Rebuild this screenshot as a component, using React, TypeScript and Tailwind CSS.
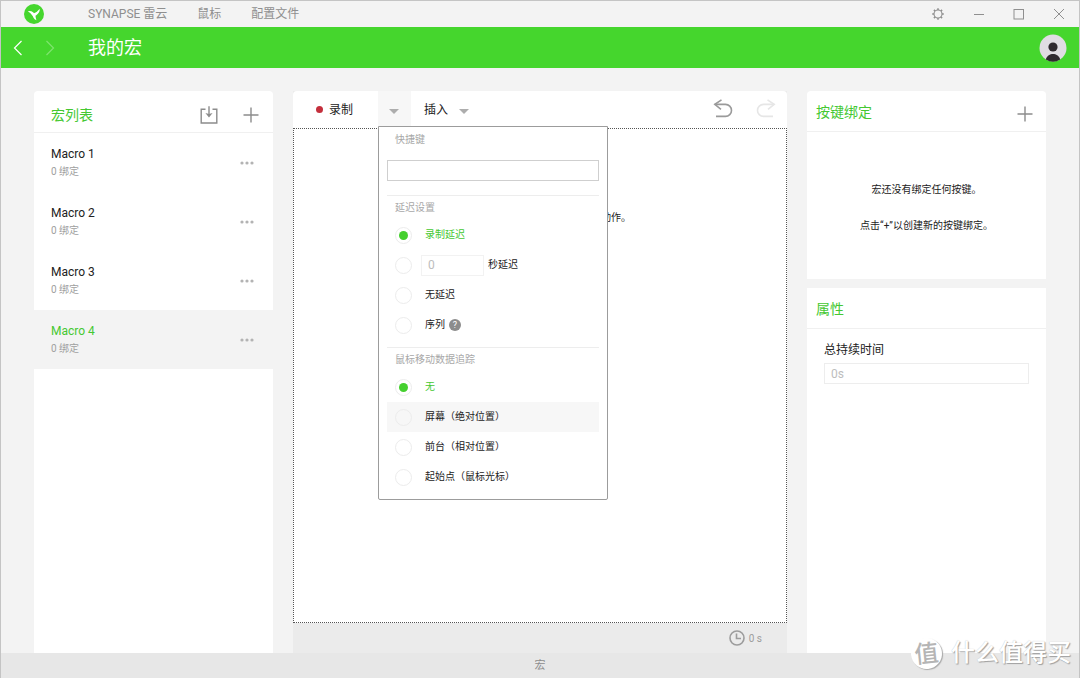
import { useState } from "react";
import type { ReactNode } from "react";

type IconProps = { className?: string };

function RazerLogo() {
  return (
    <svg viewBox="0 0 20 20" className="size-5" aria-hidden="true">
      <circle cx="10" cy="10" r="10" fill="#45d62d" />
      <g fill="#fff">
        <path d="M3.800 7.300Q6.800 6.600 9.400 8.600l1.400 2-1.600 1.800Q7 9 3.800 7.300z" />
        <path d="M15.800 4.800Q15.800 9.200 12 11.400l-2.200.2-.4-2.200Q13.200 8.400 15.800 4.800z" />
        <path d="M8.800 10.200l2.800.3Q11.200 13 12.400 16.200 8.400 14.200 8.800 10.200z" />
      </g>
    </svg>
  );
}

function GearIcon() {
  return (
    <svg viewBox="0 0 14 14" className="size-[14px]" fill="none" stroke="currentColor" aria-hidden="true">
      <circle cx="7" cy="7" r="4" strokeWidth="1.1" />
      <path
        strokeWidth="1.5"
        d="M7 1.2V3M7 11v1.8M1.2 7H3M11 7h1.8M2.9 2.9l1.3 1.3M9.8 9.8l1.3 1.3M11.1 2.9 9.8 4.2M4.2 9.8l-1.3 1.3"
      />
    </svg>
  );
}

function MinimizeIcon() {
  return (
    <svg viewBox="0 0 12 12" className="size-3" stroke="currentColor" aria-hidden="true">
      <path d="M1 6.5h10" />
    </svg>
  );
}

function MaximizeIcon() {
  return (
    <svg viewBox="0 0 12 12" className="size-3" fill="none" stroke="currentColor" aria-hidden="true">
      <rect x="1" y="1.5" width="9.5" height="9.5" />
    </svg>
  );
}

function CloseIcon() {
  return (
    <svg viewBox="0 0 12 12" className="size-3" stroke="currentColor" aria-hidden="true">
      <path d="M1 1l10 10M11 1L1 11" />
    </svg>
  );
}

function Chevron({ className }: IconProps) {
  return (
    <svg viewBox="0 0 10 16" className={className} fill="none" stroke="currentColor" strokeWidth="1.2" aria-hidden="true">
      <path d="M8.5 1L1.500 8l7 7" />
    </svg>
  );
}

function Avatar() {
  return (
    <svg viewBox="0 0 28 28" className="size-7" aria-hidden="true">
      <circle cx="14" cy="14" r="13.5" fill="#e0dde3" />
      <circle cx="14" cy="13" r="4.6" fill="#2f2a30" />
      <path d="M6.800 25.400C8 21.600 11 20 14 20s6 1.600 7.200 5.400A13.500 13.500 0 0 1 6.800 25.400z" fill="#2f2a30" />
    </svg>
  );
}

function PlusIcon() {
  return (
    <svg viewBox="0 0 16 16" className="size-4" stroke="currentColor" strokeWidth="1.4" aria-hidden="true">
      <path d="M8 .5v15M.5 8h15" />
    </svg>
  );
}

function ImportIcon() {
  return (
    <svg viewBox="0 0 18 18" className="size-[18px]" fill="none" stroke="currentColor" strokeWidth="1.4" aria-hidden="true">
      <path d="M5.500 3.200H1.200v13.800h15.600V3.200H12.500" />
      <path d="M9 .2v9" />
      <path d="M5.400 7l3.600 1 3.600-1L9 11.400z" fill="currentColor" stroke="none" />
    </svg>
  );
}

function UndoIcon({ className }: IconProps) {
  return (
    <svg viewBox="0 0 20 20" className={className} fill="none" stroke="currentColor" strokeWidth="1.6" aria-hidden="true">
      <path d="M8.500 .8L1.800 5.400l6.200 5" />
      <path d="M1.800 5.400h10.700a6 6 0 0 1 0 12H3" />
    </svg>
  );
}

function ClockIcon() {
  return (
    <svg viewBox="0 0 16 16" className="size-4" fill="none" stroke="currentColor" strokeWidth="1.6" aria-hidden="true">
      <circle cx="8" cy="8" r="7" />
      <path d="M7.500 3.500v5h4.500" />
    </svg>
  );
}

function Caret() {
  return (
    <svg viewBox="0 0 10 5" className="h-[5px] w-[10px]" fill="#adadad" aria-hidden="true">
      <path d="M0 0h10L5 5z" />
    </svg>
  );
}

function MoreIcon() {
  return (
    <svg viewBox="0 0 14 4" className="h-1 w-[14px]" fill="#b3b3b3" aria-hidden="true">
      <circle cx="2" cy="2" r="1.600" />
      <circle cx="7" cy="2" r="1.600" />
      <circle cx="12" cy="2" r="1.600" />
    </svg>
  );
}

function PanelHeader({ title, children }: { title: string; children?: ReactNode }) {
  return (
    <header className="flex h-[41px] items-center justify-between border-b border-[#f0f0f0] pt-px pr-[13px] pl-[9px]">
      <h2 className="text-sm text-[#45c832]">{title}</h2>
      {children}
    </header>
  );
}

type OptionProps = {
  name: string;
  label: string;
  checked: boolean;
  onSelect: () => void;
  hovered?: boolean;
  children?: ReactNode;
};

function Option({ name, label, checked, onSelect, hovered, children }: OptionProps) {
  return (
    <div className={hovered ? "flex h-[30px] items-center bg-[#f7f7f7] pl-2" : "flex h-[30px] items-center pl-2"}>
      <label className={checked ? "flex items-center text-[#45c832]" : "flex items-center text-[#222]"}>
        <input
          type="radio"
          name={name}
          aria-label={label}
          checked={checked}
          onChange={onSelect}
          className="mr-[13px] size-[17px] appearance-none rounded-full border border-[#ececec] bg-clip-content p-[3px] checked:bg-[#45d02f]"
        />
        {children ? null : label}
      </label>
      {children}
    </div>
  );
}

const macros = ["Macro 1", "Macro 2", "Macro 3", "Macro 4"];

const trackingModes = ["无", "屏幕（绝对位置）", "前台（相对位置）", "起始点（鼠标光标）"];

function RecordMenu() {
  const [delay, setDelay] = useState("录制延迟");
  const [tracking, setTracking] = useState("无");

  return (
    <div className="absolute top-[35px] left-0 z-10 w-[230px] rounded-b-xs border border-[#9c9c9c] bg-white px-2 text-[10px] leading-4">
      <section className="pb-[14px]">
        <label htmlFor="shortcut" className="flex h-[26px] items-center pl-2 text-[#a8a8a8]">
          快捷键
        </label>
        <input id="shortcut" className="mt-[7px] block h-[21px] w-full border border-[#cfcfcf] px-2 outline-none" />
      </section>

      <section className="border-t border-[#ededed] pb-[7px]">
        <h3 className="flex h-6 items-center pl-2 text-[#a8a8a8]">延迟设置</h3>
        <Option name="delay" label="录制延迟" checked={delay === "录制延迟"} onSelect={() => setDelay("录制延迟")} />
        <Option name="delay" label="秒延迟" checked={delay === "秒延迟"} onSelect={() => setDelay("秒延迟")}>
          <input
            id="seconds"
            defaultValue="0"
            className="-ml-1 h-[21px] w-[63px] border border-[#f2f2f2] px-[6px] text-xs text-[#bdbdbd] outline-none"
          />
          <label htmlFor="seconds" className="ml-1 text-[#222]">
            秒延迟
          </label>
        </Option>
        <Option name="delay" label="无延迟" checked={delay === "无延迟"} onSelect={() => setDelay("无延迟")} />
        <Option name="delay" label="序列" checked={delay === "序列"} onSelect={() => setDelay("序列")}>
          <span className="text-[#222]">序列</span>
          <button
            type="button"
            className="ml-1 flex size-3 items-center justify-center rounded-full bg-[#8c8c8c] text-[9px] leading-3 text-white"
          >
            ?
          </button>
        </Option>
      </section>

      <section className="border-t border-[#ededed] pb-[7px]">
        <h3 className="flex h-6 items-center pl-2 text-[#a8a8a8]">鼠标移动数据追踪</h3>
        {trackingModes.map((mode, index) => (
          <Option
            key={mode}
            name="tracking"
            label={mode}
            checked={tracking === mode}
            hovered={index === 1}
            onSelect={() => setTracking(mode)}
          />
        ))}
      </section>
    </div>
  );
}

export default function App() {
  const [selected, setSelected] = useState("Macro 4");

  return (
    <div
      lang="zh-CN"
      className="relative flex min-h-screen flex-col border-x border-t border-[#c4c4c4] bg-[#f3f3f3] font-[Roboto,'Noto_Sans_CJK_SC',sans-serif] text-[#222]"
    >
      <header className="flex h-[26px] items-center justify-between pr-[14px] pl-[23px] text-[#8f8f8f]">
        <div className="flex items-center">
          <RazerLogo />
          <nav className="ml-[44px] flex items-center gap-[30px] text-xs leading-4">
            <a href="#synapse">SYNAPSE 雷云</a>
            <a href="#mouse">鼠标</a>
            <a href="#profiles">配置文件</a>
          </nav>
        </div>
        <div className="flex items-center gap-7">
          <button type="button" aria-label="设置">
            <GearIcon />
          </button>
          <button type="button" aria-label="最小化">
            <MinimizeIcon />
          </button>
          <button type="button" aria-label="最大化">
            <MaximizeIcon />
          </button>
          <button type="button" aria-label="关闭">
            <CloseIcon />
          </button>
        </div>
      </header>

      <div className="flex h-[41px] items-center justify-between bg-[#45d62d] px-3 text-white">
        <div className="flex items-center">
          <button type="button" aria-label="后退">
            <Chevron className="h-4 w-[10px]" />
          </button>
          <button type="button" aria-label="前进" className="ml-[22px] text-[#7fe46e]">
            <Chevron className="h-4 w-[10px] rotate-180" />
          </button>
          <h1 className="ml-[33px] text-lg leading-6">我的宏</h1>
        </div>
        <button type="button" aria-label="账户">
          <Avatar />
        </button>
      </div>

      <main className="grid flex-1 grid-cols-[239px_minmax(0,1fr)_239px] gap-5 px-[33px] pt-[23px]">
        <section className="rounded-t bg-white">
          <header className="flex h-[42px] items-center justify-between border-b border-[#f0f0f0] pt-2 pr-[14px] pb-px pl-[17px]">
            <h2 className="text-sm text-[#45c832]">宏列表</h2>
            <div className="flex items-center gap-[25px] text-[#8c8c8c]">
              <button type="button" aria-label="导入">
                <ImportIcon />
              </button>
              <button type="button" aria-label="新建宏">
                <PlusIcon />
              </button>
            </div>
          </header>
          <ul>
            {macros.map((macro) => {
              const active = macro === selected;
              return (
                <li
                  key={macro}
                  className={
                    active
                      ? "flex h-[59px] items-center justify-between bg-[#f3f3f3] pr-[19px]"
                      : "flex h-[59px] items-center justify-between pr-[19px]"
                  }
                >
                  <button type="button" onClick={() => setSelected(macro)} className="h-full flex-1 pt-3 pb-[11px] pl-[17px] text-left">
                    <span className={active ? "block text-xs leading-[18px] text-[#45c832]" : "block text-xs leading-[18px]"}>
                      {macro}
                    </span>
                    <span className="block text-[10px] leading-[18px] text-[#a0a0a0]">0 绑定</span>
                  </button>
                  <button type="button" aria-label="更多">
                    <MoreIcon />
                  </button>
                </li>
              );
            })}
          </ul>
        </section>

        <section className="flex flex-col bg-[#ebebeb]">
          <div className="flex h-[37px] justify-between rounded-t bg-white text-xs">
            <div className="flex">
              <button type="button" className="flex w-[85px] items-center gap-[6px] pl-[23px]">
                <span className="size-[7px] rounded-full bg-[#c42f3c]" />
                录制
              </button>
              <div className="relative flex">
                <button type="button" aria-label="录制选项" className="flex w-[33px] items-center justify-center bg-[#f7f7f7] pt-1 pr-[2px]">
                  <Caret />
                </button>
                <RecordMenu />
              </div>
              <button type="button" className="flex items-center gap-[11px] pl-[13px]">
                插入
                <span className="pt-1">
                  <Caret />
                </span>
              </button>
            </div>
            <div className="flex items-center gap-[23px] pr-[11px] pb-[2px]">
              <button type="button" aria-label="撤销" className="text-[#9a9a9a]">
                <UndoIcon className="size-5" />
              </button>
              <button type="button" aria-label="重做" className="text-[#e6e6e6]">
                <UndoIcon className="size-5 -scale-x-100" />
              </button>
            </div>
          </div>
          <div className="flex-1 border border-dotted border-[#555] bg-white">
            <p className="pt-[81px] pr-[155px] text-right text-[10px] leading-4">动作。</p>
          </div>
          <div className="flex h-[30px] items-center justify-end gap-1 pr-[25px] text-[10px] text-[#9c9c9c]">
            <ClockIcon />
            <span>0 s</span>
          </div>
        </section>

        <div className="flex flex-col gap-[9px]">
          <section className="rounded-t bg-white">
            <PanelHeader title="按键绑定">
              <button type="button" aria-label="添加绑定" className="pt-1 text-[#8c8c8c]">
                <PlusIcon />
              </button>
            </PanelHeader>
            <div className="space-y-5 pt-[50px] pb-[45px] text-center text-[10px] leading-4">
              <p>宏还没有绑定任何按键。</p>
              <p>点击“+”以创建新的按键绑定。</p>
            </div>
          </section>
          <section className="flex-1 bg-white">
            <PanelHeader title="属性" />
            <div className="px-[17px] pt-[13px]">
              <label htmlFor="duration" className="block text-xs leading-4">
                总持续时间
              </label>
              <input
                id="duration"
                readOnly
                value="0s"
                className="mt-[5px] block h-[21px] w-full border border-[#ededed] px-[6px] text-xs text-[#bdbdbd] outline-none"
              />
            </div>
          </section>
        </div>
      </main>

      <footer className="flex h-[25px] items-center justify-center bg-[#e7e7e7] pt-[2px] text-[11px] text-[#8c8c8c]">宏</footer>

      <div className="pointer-events-none absolute right-2 bottom-[9px] flex items-center gap-[9px] text-white">
        <span className="flex size-[31px] -rotate-6 items-center justify-center rounded-full bg-white text-2xl font-medium text-[#b5b5b5] shadow-[1px_1px_1px_#aaa]">
          值
        </span>
        <span className="text-2xl leading-8 font-medium [text-shadow:1px_1px_1px_#a0a0a0,0_0_1px_#bbb]">什么值得买</span>
      </div>
    </div>
  );
}
